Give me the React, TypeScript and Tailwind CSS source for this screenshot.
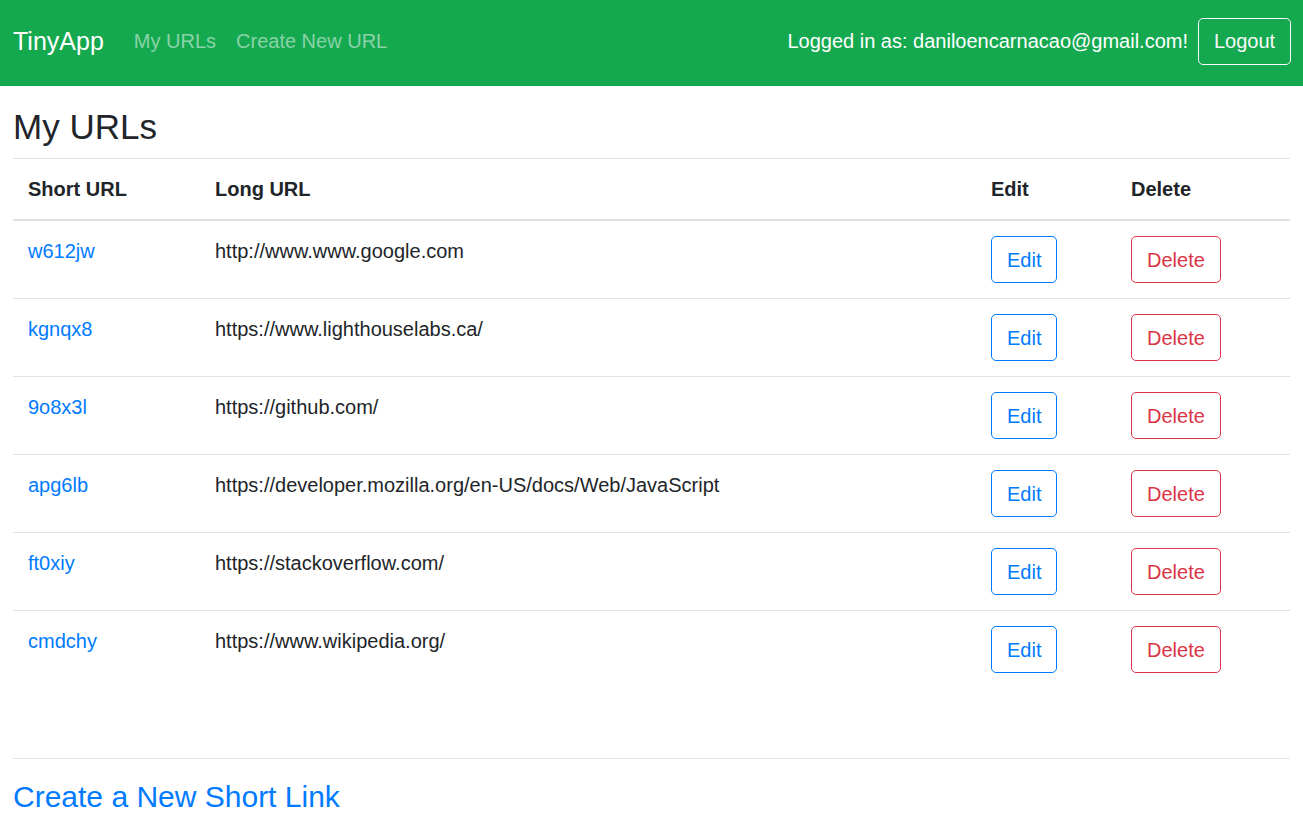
import React from 'react'

interface UrlRow {
  short: string
  long: string
}

const urls: UrlRow[] = [
  { short: 'w612jw', long: 'http://www.www.google.com' },
  { short: 'kgnqx8', long: 'https://www.lighthouselabs.ca/' },
  { short: '9o8x3l', long: 'https://github.com/' },
  { short: 'apg6lb', long: 'https://developer.mozilla.org/en-US/docs/Web/JavaScript' },
  { short: 'ft0xiy', long: 'https://stackoverflow.com/' },
  { short: 'cmdchy', long: 'https://www.wikipedia.org/' },
]

function Navbar() {
  return (
    <nav className="h-[86px] bg-[#14a84f] flex items-center justify-between pl-[13px] pr-[12px] pb-[4px]">
      <div className="flex items-center">
        <a href="#" className="text-[25px] leading-[38px] text-white mr-[20px]">
          TinyApp
        </a>
        <a href="#" className="text-[20px] leading-[30px] px-[10px] text-white/50">
          My URLs
        </a>
        <a href="#" className="text-[20px] leading-[30px] px-[10px] text-white/50">
          Create New URL
        </a>
      </div>
      <div className="flex items-center gap-[10px]">
        <span className="text-[20px] leading-[30px] text-white">
          Logged in as: daniloencarnacao@gmail.com!
        </span>
        <button className="h-[47px] w-[93px] text-[20px] leading-[30px] text-[#f8f9fa] border border-[#f8f9fa] rounded-[5px]">
          Logout
        </button>
      </div>
    </nav>
  )
}

export default function App() {
  return (
    <div className="min-h-screen bg-white text-[#212529] font-['Liberation_Sans',Arial,sans-serif]">
      <Navbar />
      <main className="px-[13px]">
        <h1 className="text-[35px] leading-[42px] mt-[20px] mb-[10px]">My URLs</h1>
        <table className="w-full border-collapse text-[20px] leading-[30px]">
          <thead>
            <tr className="border-t border-[#dee2e6] border-b-2">
              <th className="w-[187px] p-[15px] text-left font-bold">Short URL</th>
              <th className="p-[15px] text-left font-bold">Long URL</th>
              <th className="w-[140px] p-[15px] text-left font-bold">Edit</th>
              <th className="w-[174px] p-[15px] text-left font-bold">Delete</th>
            </tr>
          </thead>
          <tbody>
            {urls.map((u) => (
              <tr key={u.short} className="border-t border-[#dee2e6] align-top">
                <td className="p-[15px]">
                  <a href="#" className="text-[#007bff]">
                    {u.short}
                  </a>
                </td>
                <td className="p-[15px]">{u.long}</td>
                <td className="p-[15px]">
                  <button className="h-[47px] px-[15px] text-[#007bff] border border-[#007bff] rounded-[5px]">
                    Edit
                  </button>
                </td>
                <td className="p-[15px]">
                  <button className="h-[47px] px-[15px] text-[#dc3545] border border-[#dc3545] rounded-[5px]">
                    Delete
                  </button>
                </td>
              </tr>
            ))}
          </tbody>
        </table>
        <hr className="mt-[70px] border-t border-black/10" />
        <h3 className="mt-[20px] text-[30px] leading-[36px]">
          <a href="#" className="text-[#007bff]">
            Create a New Short Link
          </a>
        </h3>
      </main>
    </div>
  )
}
